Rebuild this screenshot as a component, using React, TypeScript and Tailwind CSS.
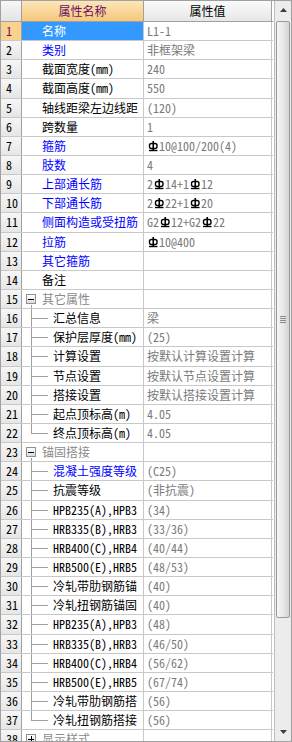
import React from "react";

type Seg = string | { bar: true };

interface Row {
  no: number;
  name: string;
  kind?: "top" | "group" | "child";
  blue?: boolean;
  value?: Seg[];
  last?: boolean;
  open?: boolean;
}

const B = { bar: true } as const;

// 名称列按可见宽度截断（与原界面一致）
const rows: Row[] = [
  { no: 1, name: "名称", value: ["L1-1"] },
  { no: 2, name: "类别", blue: true, value: ["非框架梁"] },
  { no: 3, name: "截面宽度(mm)", value: ["240"] },
  { no: 4, name: "截面高度(mm)", value: ["550"] },
  { no: 5, name: "轴线距梁左边线距", value: ["(120)"] },
  { no: 6, name: "跨数量", value: ["1"] },
  { no: 7, name: "箍筋", blue: true, value: [B, "10@100/200(4)"] },
  { no: 8, name: "肢数", blue: true, value: ["4"] },
  { no: 9, name: "上部通长筋", blue: true, value: ["2", B, "14+1", B, "12"] },
  { no: 10, name: "下部通长筋", blue: true, value: ["2", B, "22+1", B, "20"] },
  { no: 11, name: "侧面构造或受扭筋", blue: true, value: ["G2", B, "12+G2", B, "22"] },
  { no: 12, name: "拉筋", blue: true, value: [B, "10@400"] },
  { no: 13, name: "其它箍筋", blue: true },
  { no: 14, name: "备注" },
  { no: 15, name: "其它属性", kind: "group", open: true },
  { no: 16, name: "汇总信息", kind: "child", value: ["梁"] },
  { no: 17, name: "保护层厚度(mm)", kind: "child", value: ["(25)"] },
  { no: 18, name: "计算设置", kind: "child", value: ["按默认计算设置计算"] },
  { no: 19, name: "节点设置", kind: "child", value: ["按默认节点设置计算"] },
  { no: 20, name: "搭接设置", kind: "child", value: ["按默认搭接设置计算"] },
  { no: 21, name: "起点顶标高(m)", kind: "child", value: ["4.05"] },
  { no: 22, name: "终点顶标高(m)", kind: "child", value: ["4.05"], last: true },
  { no: 23, name: "锚固搭接", kind: "group", open: true },
  { no: 24, name: "混凝土强度等级", kind: "child", blue: true, value: ["(C25)"] },
  { no: 25, name: "抗震等级", kind: "child", value: ["(非抗震)"] },
  { no: 26, name: "HPB235(A),HPB3", kind: "child", value: ["(34)"] },
  { no: 27, name: "HRB335(B),HRB3", kind: "child", value: ["(33/36)"] },
  { no: 28, name: "HRB400(C),HRB4", kind: "child", value: ["(40/44)"] },
  { no: 29, name: "HRB500(E),HRB5", kind: "child", value: ["(48/53)"] },
  { no: 30, name: "冷轧带肋钢筋锚", kind: "child", value: ["(40)"] },
  { no: 31, name: "冷轧扭钢筋锚固", kind: "child", value: ["(40)"] },
  { no: 32, name: "HPB235(A),HPB3", kind: "child", value: ["(48)"] },
  { no: 33, name: "HRB335(B),HRB3", kind: "child", value: ["(46/50)"] },
  { no: 34, name: "HRB400(C),HRB4", kind: "child", value: ["(56/62)"] },
  { no: 35, name: "HRB500(E),HRB5", kind: "child", value: ["(67/74)"] },
  { no: 36, name: "冷轧带肋钢筋搭", kind: "child", value: ["(56)"] },
  { no: 37, name: "冷轧扭钢筋搭接", kind: "child", value: ["(56)"], last: true },
  { no: 38, name: "显示样式", kind: "group", open: false },
];

const font = "font-['Noto_Sans_Mono_CJK_SC','Noto_Sans_CJK_SC',monospace]";

// 钢筋级别符号
function BarMark() {
  return (
    <svg width="12" height="12" viewBox="0 0 12 12" className="inline-block shrink-0">
      <rect x="2.5" y="3.5" width="7.5" height="5" rx="2" fill="none" stroke="#000" strokeWidth="1.4" />
      <line x1="6.25" y1="1" x2="6.25" y2="10.5" stroke="#000" strokeWidth="1.6" />
      <line x1="2" y1="10.5" x2="10.5" y2="10.5" stroke="#000" strokeWidth="1.4" />
    </svg>
  );
}

function ToggleBox({ open }: { open?: boolean }) {
  return (
    <span className="relative flex h-[10px] w-[10px] shrink-0 items-center justify-center border border-[#919191] bg-gradient-to-b from-white to-[#dcdcdc]">
      <span className="h-px w-[6px] bg-black" />
      {!open && <span className="absolute h-[6px] w-px bg-black" />}
    </span>
  );
}

function NameCell({ row }: { row: Row }) {
  const selected = row.no === 1;
  const color = selected ? "text-white" : row.kind === "group" ? "text-[#8a8a8a]" : row.blue ? "text-[#0000ff]" : "text-black";

  if (row.kind === "group") {
    return (
      <div className="relative flex h-full items-center pl-[4px]">
        <ToggleBox open={row.open} />
        {row.open && <span className="absolute left-[9px] top-[15px] bottom-0 w-px bg-[#a0a0a0]" />}
        <span className={`ml-[6px] whitespace-nowrap ${color}`}>{row.name}</span>
      </div>
    );
  }

  if (row.kind === "child") {
    return (
      <div className="relative flex h-full items-center pl-[31px]">
        {/* 树形连接线 */}
        <span className={`absolute left-[9px] top-0 w-px bg-[#a0a0a0] ${row.last ? "h-1/2" : "h-full"}`} />
        <span className="absolute left-[9px] top-1/2 h-px w-[17px] bg-[#a0a0a0]" />
        <span className={`whitespace-nowrap ${color}`}>{row.name}</span>
      </div>
    );
  }

  return (
    <div className={`flex h-full items-center pl-[20px] ${selected ? "bg-[#3399ff]" : ""}`}>
      <span className={`whitespace-nowrap ${color}`}>{row.name}</span>
    </div>
  );
}

function ValueCell({ value }: { value?: Seg[] }) {
  return (
    <div className="flex h-full items-center whitespace-nowrap pl-[3px] text-[#7a7a7a]">
      {value?.map((s, i) => (typeof s === "string" ? <span key={i}>{s}</span> : <BarMark key={i} />))}
    </div>
  );
}

function ScrollBar() {
  return (
    <div className="flex h-full w-[17px] flex-col border-l border-[#bdbdbd] bg-[#ececec]">
      <div className="flex h-[17px] items-center justify-center">
        <svg width="7" height="4" viewBox="0 0 7 4">
          <path d="M0 4 L3.5 0 L7 4 Z" fill="#3c3c3c" />
        </svg>
      </div>
      <div className="mx-[1px] mt-[3px] flex h-[597px] items-center justify-center rounded-[2px] border border-[#9a9a9a] bg-gradient-to-r from-[#f6f6f6] via-[#e8e8e8] to-[#d2d2d2]">
        <div className="flex flex-col gap-[1px]">
          <span className="h-px w-[6px] bg-[#8a8a8a]" />
          <span className="h-px w-[6px] bg-[#8a8a8a]" />
          <span className="h-px w-[6px] bg-[#8a8a8a]" />
          <span className="h-px w-[6px] bg-[#8a8a8a]" />
        </div>
      </div>
      <div className="flex-1" />
      <div className="mb-[1px] flex h-[17px] items-center justify-center">
        <svg width="7" height="4" viewBox="0 0 7 4">
          <path d="M0 0 L3.5 4 L7 0 Z" fill="#3c3c3c" />
        </svg>
      </div>
    </div>
  );
}

export default function App() {
  return (
    <div className={`flex h-[742px] w-[292px] overflow-hidden border border-[#a0a0a0] bg-white text-[12px] leading-none ${font}`}>
      <div className="flex w-[273px] flex-col">
        {/* 表头 */}
        <div className="flex h-[21px] shrink-0 border-b border-[#a0a0a0]">
          <div className="w-[21px] border-r border-[#a0a0a0] bg-gradient-to-b from-[#f7f7f7] to-[#e3e3e3]" />
          <div className="flex w-[122px] items-center justify-center border-r border-[#a0a0a0] bg-gradient-to-b from-[#fce6b8] to-[#f5c77a] text-[#6b0f63]">
            属性名称
          </div>
          <div className="flex w-[128px] items-center justify-center border-r border-[#a0a0a0] bg-gradient-to-b from-[#fafafa] to-[#e6e6e6] text-black">
            属性值
          </div>
        </div>
        {rows.map((row) => (
          <div key={row.no} className="flex h-[19.15px] shrink-0 border-b border-[#c8c8c8]">
            <div
              className={`flex w-[21px] items-center border-r border-[#a0a0a0] pl-[5px] ${
                row.no === 1 ? "bg-[#f9d28e] text-[#6b0f63]" : "bg-gradient-to-b from-[#f6f6f6] to-[#e6e6e6] text-black"
              }`}
            >
              {row.no}
            </div>
            <div className="w-[122px] overflow-hidden border-r border-[#c8c8c8]">
              <NameCell row={row} />
            </div>
            <div className="w-[128px] overflow-hidden border-r border-[#c8c8c8]">
              <ValueCell value={row.value} />
            </div>
          </div>
        ))}
      </div>
      <div className="w-px" />
      <ScrollBar />
    </div>
  );
}
